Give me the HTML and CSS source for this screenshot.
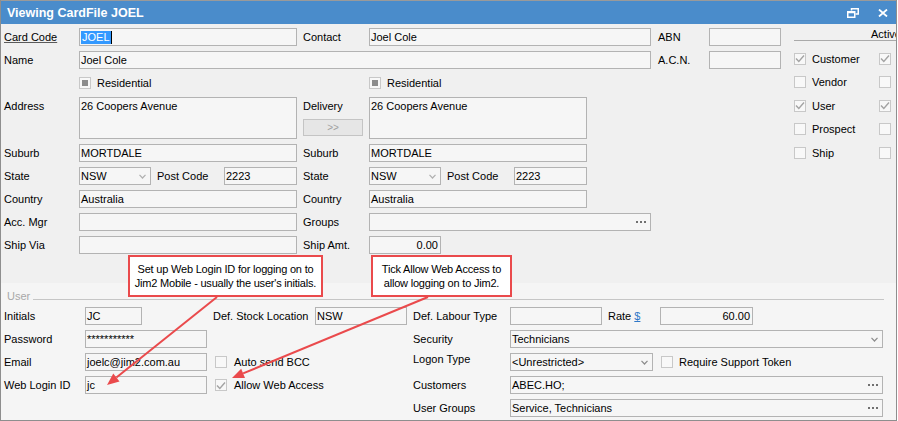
FILE: index.html
```html
<!DOCTYPE html>
<html lang="en">
<head>
    <meta charset="UTF-8">
    <title>Viewing CardFile JOEL</title>
    <link rel="stylesheet" href="styles.css">
</head>
<body>
    <div class="window">
        <div class="titlebar">
            <span class="title">Viewing CardFile JOEL</span>
            <span class="win-btns">
                <svg width="12" height="10" viewBox="0 0 12 10">
                    <path d="M4.5 2.5V0.75H11.25V6H8.5" fill="none" stroke="#fff" stroke-width="1.5"/>
                    <rect x="0.75" y="3.75" width="7" height="5.5" fill="none" stroke="#fff" stroke-width="1.5"/>
                    <line x1="0.75" y1="4.5" x2="7.75" y2="4.5" stroke="#fff" stroke-width="1.5"/>
                </svg>
                <svg width="10" height="8" viewBox="0 0 10 8">
                    <path d="M1 0.5L9 7.5M9 0.5L1 7.5" stroke="#fff" stroke-width="1.8"/>
                </svg>
            </span>
        </div>

        <div class="top">
            <div class="card-grid">
                <span class="lbl link c1">Card Code</span>
                <div class="fld c2"><span class="sel">JOEL</span></div>
                <span class="lbl c4">Contact</span>
                <div class="fld c5-7">Joel Cole</div>
                <span class="lbl c8">ABN</span>
                <div class="fld c9"></div>

                <span class="lbl c1">Name</span>
                <div class="fld c2-7">Joel Cole</div>
                <span class="lbl c8">A.C.N.</span>
                <div class="fld c9"></div>

                <label class="check c2"><span class="chk part"></span>Residential</label>
                <label class="check c5"><span class="chk part"></span>Residential</label>

                <span class="lbl c1 top-lbl">Address</span>
                <div class="fld area c2">26 Coopers Avenue</div>
                <div class="c4 delivery">
                    <span class="lbl">Delivery</span>
                    <button class="copy-btn" type="button">&gt;&gt;</button>
                </div>
                <div class="fld area c5">26 Coopers Avenue</div>

                <span class="lbl c1">Suburb</span>
                <div class="fld c2">MORTDALE</div>
                <span class="lbl c4">Suburb</span>
                <div class="fld c5">MORTDALE</div>

                <span class="lbl c1">State</span>
                <div class="pair c2">
                    <div class="fld combo state">NSW<svg class="chev" width="7" height="5" viewBox="0 0 7 5"><path d="M0.5 0.8L3.5 4L6.5 0.8" fill="none" stroke="#b0b0b0" stroke-width="1.2"/></svg></div>
                    <span class="lbl pc">Post Code</span>
                    <div class="fld code">2223</div>
                </div>
                <span class="lbl c4">State</span>
                <div class="pair c5">
                    <div class="fld combo state">NSW<svg class="chev" width="7" height="5" viewBox="0 0 7 5"><path d="M0.5 0.8L3.5 4L6.5 0.8" fill="none" stroke="#b0b0b0" stroke-width="1.2"/></svg></div>
                    <span class="lbl pc">Post Code</span>
                    <div class="fld code">2223</div>
                </div>

                <span class="lbl c1">Country</span>
                <div class="fld c2">Australia</div>
                <span class="lbl c4">Country</span>
                <div class="fld c5">Australia</div>

                <span class="lbl c1">Acc. Mgr</span>
                <div class="fld c2"></div>
                <span class="lbl c4">Groups</span>
                <div class="fld c5-7"><svg class="dots" width="10" height="2"><rect x="0" width="2" height="2"/><rect x="4" width="2" height="2"/><rect x="8" width="2" height="2"/></svg></div>

                <span class="lbl c1">Ship Via</span>
                <div class="fld c2"></div>
                <span class="lbl c4">Ship Amt.</span>
                <div class="fld num amt c5">0.00</div>
            </div>

            <div class="types">
                <div class="types-head">Active</div>
                <div class="type-row">
                    <span class="chk on"><svg width="10" height="9" viewBox="0 0 10 9"><path d="M1 4.5L3.8 7.5L9 1.5" fill="none" stroke="#a3a3a3" stroke-width="1.4"/></svg></span>
                    <span class="type-name">Customer</span>
                    <span class="chk on"><svg width="10" height="9" viewBox="0 0 10 9"><path d="M1 4.5L3.8 7.5L9 1.5" fill="none" stroke="#a3a3a3" stroke-width="1.4"/></svg></span>
                </div>
                <div class="type-row">
                    <span class="chk"></span>
                    <span class="type-name">Vendor</span>
                    <span class="chk"></span>
                </div>
                <div class="type-row">
                    <span class="chk on"><svg width="10" height="9" viewBox="0 0 10 9"><path d="M1 4.5L3.8 7.5L9 1.5" fill="none" stroke="#a3a3a3" stroke-width="1.4"/></svg></span>
                    <span class="type-name">User</span>
                    <span class="chk on"><svg width="10" height="9" viewBox="0 0 10 9"><path d="M1 4.5L3.8 7.5L9 1.5" fill="none" stroke="#a3a3a3" stroke-width="1.4"/></svg></span>
                </div>
                <div class="type-row">
                    <span class="chk"></span>
                    <span class="type-name">Prospect</span>
                    <span class="chk"></span>
                </div>
                <div class="type-row">
                    <span class="chk"></span>
                    <span class="type-name">Ship</span>
                    <span class="chk"></span>
                </div>
            </div>
        </div>

        <div class="user">
            <div class="legend"><span>User</span><span class="rule"></span></div>
            <div class="user-grid">
                <span class="lbl u1">Initials</span>
                <div class="fld u2 initials">JC</div>
                <span class="lbl u4">Def. Stock Location</span>
                <div class="fld u5">NSW</div>
                <span class="lbl u7">Def. Labour Type</span>
                <div class="fld u8"></div>
                <span class="lbl u10">Rate <span class="cur">$</span></span>
                <div class="fld num u11">60.00</div>

                <span class="lbl u1">Password</span>
                <div class="fld u2 pw">***********</div>
                <span class="lbl u7">Security</span>
                <div class="fld combo u8-12">Technicians<svg class="chev" width="7" height="5" viewBox="0 0 7 5"><path d="M0.5 0.8L3.5 4L6.5 0.8" fill="none" stroke="#8c8c8c" stroke-width="1.2"/></svg></div>

                <span class="lbl u1">Email</span>
                <div class="fld u2">joelc@jim2.com.au</div>
                <label class="check wide u4-6"><span class="chk"></span>Auto send BCC</label>
                <span class="lbl u7 logon">Logon Type</span>
                <div class="pair u8-12">
                    <div class="fld combo logon-type">&lt;Unrestricted&gt;<svg class="chev" width="7" height="5" viewBox="0 0 7 5"><path d="M0.5 0.8L3.5 4L6.5 0.8" fill="none" stroke="#8c8c8c" stroke-width="1.2"/></svg></div>
                    <label class="check token"><span class="chk"></span>Require Support Token</label>
                </div>

                <span class="lbl u1">Web Login ID</span>
                <div class="fld u2">jc</div>
                <label class="check wide u4-6"><span class="chk on"><svg width="10" height="9" viewBox="0 0 10 9"><path d="M1 4.5L3.8 7.5L9 1.5" fill="none" stroke="#a3a3a3" stroke-width="1.4"/></svg></span>Allow Web Access</label>
                <span class="lbl u7">Customers</span>
                <div class="fld u8-12">ABEC.HO;<svg class="dots" width="10" height="2"><rect x="0" width="2" height="2"/><rect x="4" width="2" height="2"/><rect x="8" width="2" height="2"/></svg></div>

                <span class="lbl u7 last-row">User Groups</span>
                <div class="fld u8-12 last-row">Service, Technicians<svg class="dots" width="10" height="2"><rect x="0" width="2" height="2"/><rect x="4" width="2" height="2"/><rect x="8" width="2" height="2"/></svg></div>
            </div>
        </div>

        <!-- annotation callouts -->
        <div class="callout login-note">Set up Web Login ID for logging on to<br>Jim2 Mobile - usually the user's initials.</div>
        <div class="callout access-note">Tick Allow Web Access to<br>allow logging on to Jim2.</div>
        <svg class="arrows" width="898" height="421" viewBox="0 0 898 421">
            <line x1="217" y1="297" x2="116.4" y2="377.5" stroke="#ea4a4c" stroke-width="2"/>
            <polygon points="107,385 119.5,381.4 113.3,373.6" fill="#ea4a4c"/>
            <line x1="428" y1="297" x2="243.1" y2="373.4" stroke="#ea4a4c" stroke-width="2"/>
            <polygon points="232,378 245,378 241.2,368.8" fill="#ea4a4c"/>
        </svg>
    </div>
</body>
</html>
```

FILE: styles.css
```css
* {
    box-sizing: border-box;
}

body {
    margin: 0;
    font-family: "Liberation Sans", Arial, sans-serif;
    font-size: 11px;
    color: #000;
    background: #fff;
}

.window {
    position: relative;
    width: 897px;
    height: 421px;
    border: 1px solid #8e8e8e;
    border-top: none;
    background: #f0f0f0;
    overflow: hidden;
}

.titlebar {
    height: 24px;
    background: #4a8ccb;
    border-top: 1px solid #9a9a9a;
    display: flex;
    align-items: center;
    padding-left: 6px;
    color: #fff;
}

.title {
    flex: 1;
    font-weight: bold;
    font-size: 12.5px;
}

.win-btns {
    display: flex;
    align-items: center;
    gap: 19px;
    margin-right: 8px;
}

.top {
    height: 259px;
    display: flex;
    padding: 4px 0 0 3px;
}

.lbl {
    white-space: nowrap;
    line-height: 13px;
}

.link {
    text-decoration: underline;
    text-decoration-color: #5a5a5a;
}

.fld {
    height: 18px;
    border: 1px solid #b3b3b3;
    background: #f6f6f6;
    padding: 0 2px 0 1px;
    display: flex;
    align-items: center;
    white-space: nowrap;
    overflow: hidden;
    line-height: 13px;
}

.fld.area {
    height: 42px;
    align-items: flex-start;
    padding-top: 2px;
}

.fld.num {
    justify-content: flex-end;
}

.combo .chev,
.fld .dots {
    margin-left: auto;
    flex: none;
}

.combo .chev {
    margin-right: 2px;
}

.fld .dots {
    fill: #707070;
    margin-right: 2px;
}

.sel {
    background: #3399ff;
    color: #fff;
    padding: 0 1px;
    border-right: 1px solid #000;
}

/* top card grid */
.card-grid {
    display: grid;
    grid-template-columns: 75px 218px 6px 66px 218px 64px 7px 51px 72px;
    grid-template-rows: 18px 18px 18px 42px repeat(5, 18px);
    row-gap: 5px;
    align-items: center;
}

.c1 { grid-column: 1; }
.c2 { grid-column: 2; }
.c4 { grid-column: 4; }
.c5 { grid-column: 5; }
.c8 { grid-column: 8; }
.c9 { grid-column: 9; }
.c5-7 { grid-column: 5 / 7; }
.c2-7 { grid-column: 2 / 7; }

.top-lbl {
    align-self: start;
    padding-top: 3px;
}

.delivery {
    align-self: start;
    display: flex;
    flex-direction: column;
    padding-top: 3px;
}

.copy-btn {
    margin-top: 6px;
    width: 60px;
    height: 17px;
    border: 1px solid #c4c4c4;
    background: #e6e6e6;
    color: #a0a0a0;
    font-family: "Liberation Sans", Arial, sans-serif;
    font-size: 10px;
    padding: 0;
}

.amt {
    width: 72px;
}

.pair {
    display: flex;
    align-items: center;
}

.fld.state {
    width: 72px;
}

.pc {
    margin-left: 6px;
}

.fld.code {
    width: 73px;
    margin-left: auto;
}

/* checkboxes */
.check {
    display: flex;
    align-items: center;
    gap: 6px;
    white-space: nowrap;
}

.chk {
    width: 12px;
    height: 12px;
    border: 1px solid #c8c8c8;
    background: #f8f8f8;
    display: inline-flex;
    align-items: center;
    justify-content: center;
    flex: none;
}

.chk.part::after {
    content: "";
    width: 6px;
    height: 6px;
    background: #8c8c8c;
}

/* right type panel */
.types {
    margin-left: 13px;
    width: 103px;
    overflow: hidden;
}

.types-head {
    width: 103px;
    height: 13px;
    line-height: 12px;
    border-bottom: 1px solid #a9a9a9;
    padding-left: 77px;
    white-space: nowrap;
}

.types-head + .type-row {
    margin-top: 6px;
}

.type-row {
    display: grid;
    grid-template-columns: 12px 73px 12px;
    align-items: center;
    height: 23.5px;
}

.type-name {
    padding-left: 6px;
}

/* user section */
.user {
    height: 137px;
    background: #f5f5f5;
}

.legend {
    display: flex;
    align-items: center;
    height: 20px;
    padding-top: 7px;
    margin: 0 12px 0 6px;
    color: #a8a8a8;
    line-height: 13px;
}

.rule {
    flex: 1;
    height: 1px;
    background: #c6c6c6;
    margin: 6px 0 0 3px;
}

.user-grid {
    display: grid;
    grid-template-columns: 81px 122px 6px 102px 92px 6px 97px 92px 6px 52px 93px 130px;
    grid-template-rows: repeat(5, 18px);
    row-gap: 5px;
    align-items: center;
    margin-top: 4px;
    padding-left: 3px;
}

.u1 { grid-column: 1; }
.u2 { grid-column: 2; }
.u4 { grid-column: 4; }
.u5 { grid-column: 5; }
.u7 { grid-column: 7; }
.u8 { grid-column: 8; }
.u10 { grid-column: 10; }
.u11 { grid-column: 11; }
.u4-6 { grid-column: 4 / 7; }
.u8-12 { grid-column: 8 / 13; }

.last-row {
    grid-row: 5;
}

.fld.initials {
    width: 57px;
}

.pw {
    align-items: flex-start;
    padding-top: 2px;
}

.check.wide {
    margin-left: 2px;
    gap: 7px;
}

.logon {
    align-self: start;
}

.fld.logon-type {
    width: 143px;
}

.check.token {
    margin-left: 8px;
}

.cur {
    color: #2f78c8;
    text-decoration: underline;
}

/* callouts */
.callout {
    position: absolute;
    top: 255px;
    height: 42px;
    background: #fff;
    border: 2px solid #ea4a4c;
    text-align: center;
    line-height: 14px;
    padding-top: 5px;
    white-space: nowrap;
    letter-spacing: -0.2px;
}

.login-note {
    left: 127px;
    width: 195px;
}

.access-note {
    left: 370px;
    width: 141px;
}

.arrows {
    position: absolute;
    top: 0;
    left: -1px;
    pointer-events: none;
}
```
